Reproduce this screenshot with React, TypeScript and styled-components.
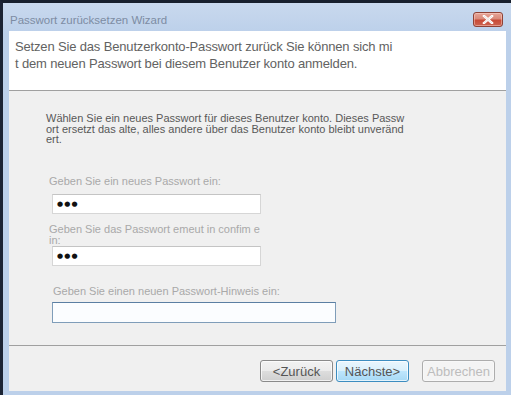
import React from "react";
import styled, { createGlobalStyle } from "styled-components";

const Global = createGlobalStyle`
  html, body { margin: 0; padding: 0; background: #ffffff; }
  body { font-family: "Liberation Sans", Arial, sans-serif; }
  * { box-sizing: border-box; }
`;

const Window = styled.div`
  width: 511px;
  height: 395px;
  display: flex;
  flex-direction: column;
  background: linear-gradient(180deg, #c9d9ee 0px, #bcd0ea 30px, #bcd0ea 100%);
  border-top: 3px solid #18202e;
  border-left: 3px solid #1c2434;
  overflow: hidden;
`;

const TitleBar = styled.div`
  height: 28px;
  flex: none;
  display: flex;
  align-items: flex-start;
  justify-content: space-between;
  padding: 0 8px 0 7px;
`;

const Title = styled.span`
  margin-top: 10px;
  font-size: 11.5px;
  line-height: 14px;
  color: #7d8ca3;
`;

const CloseButton = styled.div`
  margin-top: 9px;
  width: 30px;
  height: 15px;
  border: 1px solid #8e4236;
  border-radius: 3px;
  background: linear-gradient(180deg, #e6a497 0%, #d98a7a 45%, #c84a36 55%, #cc6450 100%);
  display: flex;
  align-items: center;
  justify-content: center;
  box-shadow: inset 0 0 0 1px rgba(255, 220, 210, 0.45);
`;

const Client = styled.div`
  flex: 1;
  display: flex;
  flex-direction: column;
  margin: 0 5px 4px 6px;
  background: #f0f0f0;
`;

const Header = styled.div`
  height: 59px;
  flex: none;
  background: #ffffff;
  padding: 7px 0 0 6px;
  font-size: 13px;
  line-height: 17px;
  letter-spacing: -0.16px;
  color: #626262;
`;

const Separator = styled.div`
  height: 1px;
  flex: none;
  background: #a0a0a0;
`;

const Body = styled.div`
  flex: 1;
  display: flex;
  flex-direction: column;
  align-items: flex-start;
  padding: 22px 0 0 37px;
`;

const Intro = styled.p`
  margin: 0;
  width: 365px;
  font-size: 11px;
  line-height: 10.5px;
  color: #585858;
`;

const Label = styled.div<{ $top: number; $indent: number }>`
  margin-top: ${(p) => p.$top}px;
  margin-left: ${(p) => p.$indent}px;
  font-size: 11px;
  line-height: 11px;
  color: #a9a9a9;
`;

const Field = styled.div<{ $width: number; $top: number; $focus?: boolean }>`
  margin-top: ${(p) => p.$top}px;
  margin-left: 6px;
  width: ${(p) => p.$width}px;
  height: ${(p) => (p.$focus ? 21 : 20)}px;
  border: 1px solid ${(p) => (p.$focus ? "#7f9db9" : "#d6d6d6")};
  border-top-color: ${(p) => (p.$focus ? "#5b7fa3" : "#c4c4c4")};
  background: ${(p) => (p.$focus ? "#fbfdff" : "#ffffff")};
  display: flex;
  align-items: center;
  padding-left: 4px;
`;

const Dots = styled.span`
  font-family: "DejaVu Sans", sans-serif;
  font-size: 7px;
  letter-spacing: 1.2px;
  color: #111111;
  line-height: 10px;
`;

const Footer = styled.div`
  height: 45px;
  flex: none;
  display: flex;
  justify-content: flex-end;
  align-items: flex-start;
  padding: 14px 11px 0 0;
`;

const Button = styled.div<{ $variant?: "default" | "primary" | "disabled"; $gap?: number }>`
  width: 73px;
  height: 22px;
  margin-left: ${(p) => p.$gap ?? 0}px;
  border-radius: 3px;
  display: flex;
  align-items: center;
  justify-content: center;
  font-size: 13px;
  color: ${(p) => (p.$variant === "disabled" ? "#bdbdbd" : "#555555")};
  border: 1px solid
    ${(p) =>
      p.$variant === "primary" ? "#3d8dc0" : p.$variant === "disabled" ? "#adadad" : "#8a8a8a"};
  background: ${(p) =>
    p.$variant === "primary"
      ? "linear-gradient(180deg, #eaf6fd 0%, #d9f0fc 50%, #bee6fd 51%, #a7d9f5 100%)"
      : p.$variant === "disabled"
      ? "#f4f4f4"
      : "linear-gradient(180deg, #f2f2f2 0%, #ebebeb 50%, #dddddd 51%, #cfcfcf 100%)"};
  box-shadow: inset 0 0 0 1px
    ${(p) => (p.$variant === "disabled" ? "#f8f8f8" : "rgba(255,255,255,0.7)")};
`;

export default function App() {
  return (
    <>
      <Global />
      <Window>
        <TitleBar>
          <Title>Passwort zurücksetzen Wizard</Title>
          <CloseButton>
            <svg width="12" height="9" viewBox="0 0 12 9">
              <path d="M2 1 L10 8 M10 1 L2 8" stroke="#ffffff" strokeWidth="2.4" strokeLinecap="square" />
              <path d="M2 1 L10 8 M10 1 L2 8" stroke="#e9e2e0" strokeWidth="1" />
            </svg>
          </CloseButton>
        </TitleBar>
        <Client>
          <Header>
            Setzen Sie das Benutzerkonto-Passwort zurück Sie können sich mi
            <br />t dem neuen Passwort bei diesem Benutzer konto anmelden.
          </Header>
          <Separator />
          <Body>
            <Intro>
              Wählen Sie ein neues Passwort für dieses Benutzer konto. Dieses Passw
              <br />
              ort ersetzt das alte, alles andere über das Benutzer konto bleibt unveränd
              <br />
              ert.
            </Intro>
            <Label $top={31} $indent={3}>Geben Sie ein neues Passwort ein:</Label>
            <Field $width={209} $top={7}>
              <Dots>●●●</Dots>
            </Field>
            <Label $top={10} $indent={3}>
              Geben Sie das Passwort emeut in confim e
              <br />
              in:
            </Label>
            <Field $width={209} $top={0}>
              <Dots>●●●</Dots>
            </Field>
            <Label $top={20} $indent={7}>Geben Sie einen neuen Passwort-Hinweis ein:</Label>
            <Field $width={284} $top={5} $focus />
          </Body>
          <Separator />
          <Footer>
            <Button>&lt;Zurück</Button>
            <Button $variant="primary" $gap={3}>Nächste&gt;</Button>
            <Button $variant="disabled" $gap={13}>Abbrechen</Button>
          </Footer>
        </Client>
      </Window>
    </>
  );
}
